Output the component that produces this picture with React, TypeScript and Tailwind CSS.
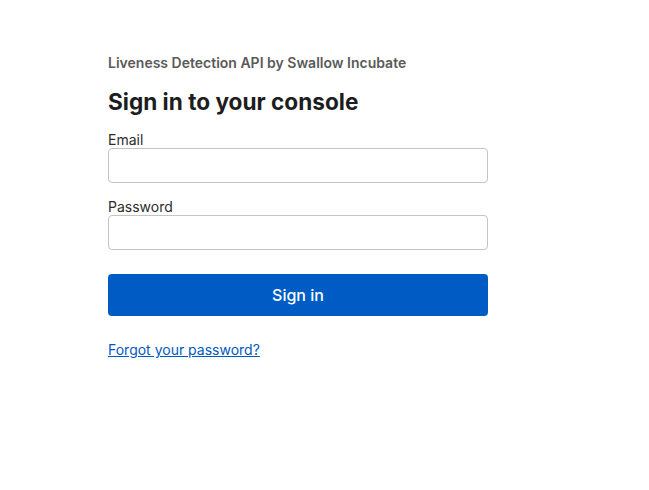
import React from 'react';

export default function App() {
    return (
        <div className="min-h-screen bg-white font-['Inter',sans-serif] text-[#1d1d1f]">
            <div className="w-[380px] ml-[108px] pt-[54px]">
                {/* Product name */}
                <p className="text-[14px] leading-[18px] font-semibold text-[#5a5a5a]">
                    Liveness Detection API by Swallow Incubate
                </p>

                {/* Heading */}
                <h1 className="mt-[16px] text-[22.6px] leading-[28px] font-bold text-[#1d1d1f]">
                    Sign in to your console
                </h1>

                <form className="mt-[16px] flex flex-col">
                    <label className="text-[14px] leading-[16px] text-[#2b2b2b]">Email</label>
                    <input
                        type="email"
                        className="h-[35px] w-full rounded-[4px] border border-[#c4c4c4] px-3 text-[14px] outline-none"
                    />

                    <label className="mt-[16px] text-[14px] leading-[16px] text-[#2b2b2b]">Password</label>
                    <input
                        type="password"
                        className="h-[35px] w-full rounded-[4px] border border-[#c4c4c4] px-3 text-[14px] outline-none"
                    />

                    <button
                        type="button"
                        className="mt-[24px] h-[42px] w-full rounded-[4px] bg-[#005cc5] text-[16px] font-medium text-white"
                    >
                        Sign in
                    </button>
                </form>

                <a href="#" className="mt-[26px] block w-fit text-[14px] leading-[16px] text-[#0059c1] underline">
                    Forgot your password?
                </a>
            </div>
        </div>
    );
}
